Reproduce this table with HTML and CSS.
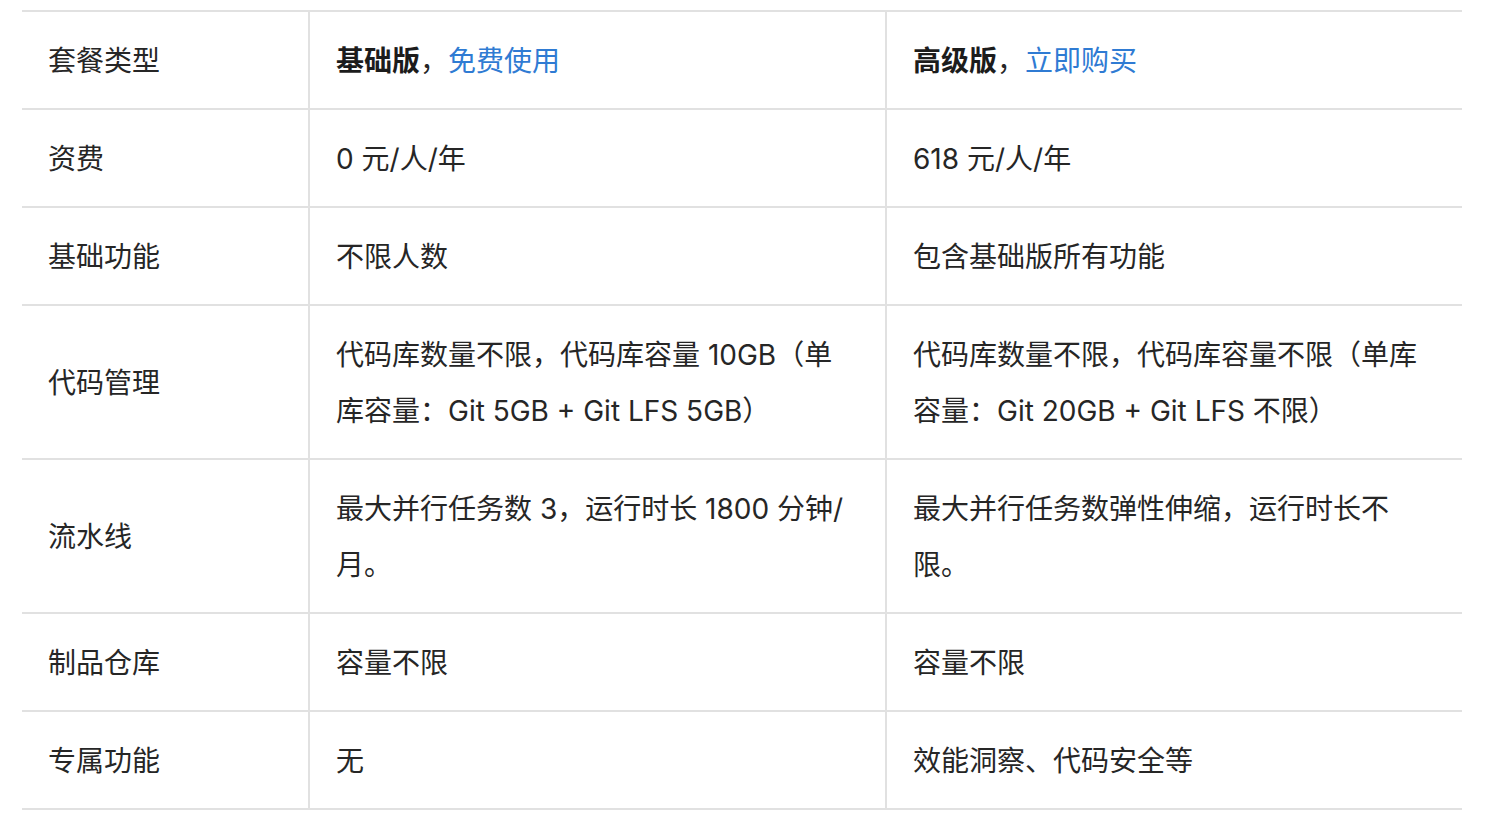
FILE: index.html
```html
<!DOCTYPE html>
<html lang="zh-CN">
<head>
<meta charset="utf-8">
<title>套餐对比</title>
<link rel="stylesheet" href="styles.css">
</head>
<body>
<table class="plans">
  <colgroup>
    <col class="c1">
    <col class="c2">
    <col class="c3">
  </colgroup>
  <tbody>
    <tr>
      <td>套餐类型</td>
      <td><strong>基础版</strong>，<a href="#">免费使用</a></td>
      <td><strong>高级版</strong>，<a href="#">立即购买</a></td>
    </tr>
    <tr>
      <td>资费</td>
      <td>0 元/人/年</td>
      <td>618 元/人/年</td>
    </tr>
    <tr>
      <td>基础功能</td>
      <td>不限人数</td>
      <td>包含基础版所有功能</td>
    </tr>
    <tr>
      <td>代码管理</td>
      <td>代码库数量不限，代码库容量 10GB（单库容量：Git 5GB + Git LFS 5GB）</td>
      <td>代码库数量不限，代码库容量不限（单库容量：Git 20GB + Git LFS 不限）</td>
    </tr>
    <tr>
      <td>流水线</td>
      <td>最大并行任务数 3，运行时长 1800 分钟/月。</td>
      <td>最大并行任务数弹性伸缩，运行时长不限。</td>
    </tr>
    <tr>
      <td>制品仓库</td>
      <td>容量不限</td>
      <td>容量不限</td>
    </tr>
    <tr>
      <td>专属功能</td>
      <td>无</td>
      <td>效能洞察、代码安全等</td>
    </tr>
  </tbody>
</table>
</body>
</html>
```

FILE: styles.css
```css
html, body {
  margin: 0;
  padding: 0;
  background: #ffffff;
}

body {
  padding: 10px 30px 0 22px;
  font-family: Inter, "Noto Sans CJK SC", "Noto Sans", sans-serif;
  font-size: 28px;
  color: #262626;
}

.plans {
  width: 1440px;
  border-collapse: collapse;
  table-layout: fixed;
}

.c1 { width: 287px; }
.c2 { width: 577px; }
.c3 { width: 576px; }

.plans td {
  border-top: 2px solid #e1e1e1;
  border-bottom: 2px solid #e1e1e1;
  border-left: 2px solid #e1e1e1;
  padding: 21px 27px 19px 26px;
  line-height: 56px;
  vertical-align: middle;
  text-align: left;
  word-break: normal;
}

.plans td:first-child {
  border-left: none;
}

.plans strong {
  font-weight: 700;
  color: #1c1c1c;
}

.plans a {
  color: #2f7bd3;
  text-decoration: none;
}
```
